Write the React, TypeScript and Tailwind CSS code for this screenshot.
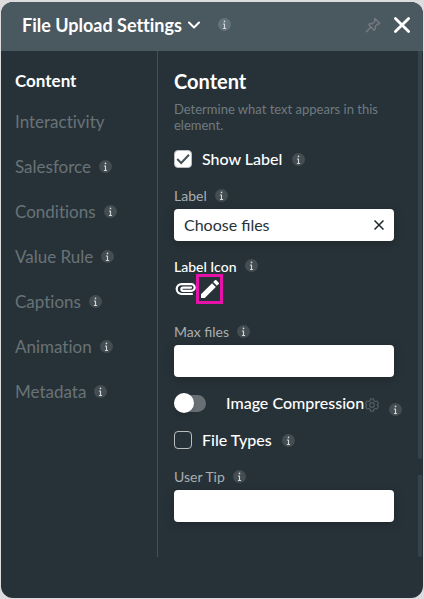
import { useState } from 'react'
import type { ReactNode } from 'react'
import { FaInfo } from 'react-icons/fa6'

interface Tab {
  name: string
  info: boolean
}

const tabs: Tab[] = [
  { name: 'Interactivity', info: false },
  { name: 'Salesforce', info: true },
  { name: 'Conditions', info: true },
  { name: 'Value Rule', info: true },
  { name: 'Captions', info: true },
  { name: 'Animation', info: true },
  { name: 'Metadata', info: true },
]

function InfoDot({ light = false }: { light?: boolean }) {
  return (
    <span
      className={`flex h-[13px] w-[13px] shrink-0 items-center justify-center rounded-full text-[#d5d9db] ${
        light ? 'bg-[#64727a]' : 'bg-[#434d52]'
      }`}
    >
      <FaInfo className="h-[9px] w-[9px]" />
    </span>
  )
}

function FieldLabel({ htmlFor, children }: { htmlFor: string; children: ReactNode }) {
  return (
    <div className="flex h-5 items-start gap-2">
      <label htmlFor={htmlFor} className="text-sm leading-[14px] text-[#a9aeb0]">
        {children}
      </label>
      <InfoDot />
    </div>
  )
}

function CheckRow({
  id,
  label,
  checked,
  onChange,
}: {
  id: string
  label: string
  checked: boolean
  onChange: (value: boolean) => void
}) {
  return (
    <div className="flex h-5 items-center">
      <span className="relative flex h-[18px] w-[18px]">
        <input
          id={id}
          type="checkbox"
          checked={checked}
          onChange={(e) => onChange(e.target.checked)}
          className="h-[18px] w-[18px] appearance-none rounded border border-[#b9bdbf] checked:bg-white"
        />
        {checked && (
          <svg viewBox="0 0 18 18" className="pointer-events-none absolute inset-0" fill="none">
            <path d="M3.2 9l4 4L15 4.8" stroke="#46535a" strokeWidth="2" />
          </svg>
        )}
      </span>
      <label htmlFor={id} className="mx-2.5 text-base leading-5 font-medium text-white">
        {label}
      </label>
      <InfoDot />
    </div>
  )
}

export default function App() {
  const [showLabel, setShowLabel] = useState(true)
  const [fileTypes, setFileTypes] = useState(false)
  const [compression, setCompression] = useState(false)
  const [label, setLabel] = useState('Choose files')
  const [maxFiles, setMaxFiles] = useState('')
  const [userTip, setUserTip] = useState('')

  const inputClass =
    'h-8 w-full rounded bg-white px-2.5 pb-0.5 text-base text-[#263238] shadow-[0_2px_8px_rgba(0,0,0,0.25)] outline-none'

  return (
    <div className="min-h-screen bg-[#dcdcde] px-px pt-0.5 pb-px font-['Lato',sans-serif]">
      <section className="flex min-h-[calc(100vh-3px)] flex-col overflow-hidden rounded-xl bg-[#273238]">
        <header className="flex h-[49px] items-center bg-[#4a585f] pr-3 pb-1 pl-[21px] [font-variant-ligatures:none]">
          <button className="flex items-center gap-1.5 text-white">
            <h1 className="text-lg leading-6 font-bold whitespace-nowrap">File Upload Settings</h1>
            <svg viewBox="0 0 12 8" className="h-2 w-3" fill="none" stroke="currentColor" strokeWidth="2">
              <path d="M1 1.5l5 5 5-5" strokeLinecap="round" strokeLinejoin="round" />
            </svg>
          </button>
          <span className="ml-[18px]">
            <InfoDot light />
          </span>
          <button aria-label="Pin" className="ml-auto text-[#76777f]">
            <svg viewBox="0 0 16 16" className="h-4 w-4" fill="none" stroke="currentColor" strokeWidth="1.5">
              <path
                d="M9.8 1.4l4.8 4.8-1 1-1-.3-2.4 2.6.2 2.5-1.3 1.2-5.4-5.4 1.2-1.3 2.5.2 2.6-2.4-.3-1zM6.2 9.8L1.4 14.6"
                strokeLinejoin="round"
                strokeLinecap="round"
              />
            </svg>
          </button>
          <button aria-label="Close" className="ml-3 text-white">
            <svg viewBox="0 0 18 18" className="h-[18px] w-[18px]" stroke="currentColor" strokeWidth="2.8">
              <path d="M2.4 2.4l13.2 13.2M15.6 2.4L2.4 15.6" strokeLinecap="round" />
            </svg>
          </button>
        </header>

        <div className="flex flex-1 pb-[41px]">
          <nav className="flex w-[157px] shrink-0 flex-col border-r border-[#465157] pt-2 pl-3.5 [font-variant-ligatures:none]">
            <a href="#content" className="flex h-10 items-center pt-1 text-[17px] leading-6 font-bold text-white">
              Content
            </a>
            {tabs.map((tab) => (
              <a
                key={tab.name}
                href={`#${tab.name}`}
                className="flex h-[45px] items-center gap-2 text-[17px] leading-6 text-[#697277]"
              >
                {tab.name}
                {tab.info && <InfoDot />}
              </a>
            ))}
          </nav>

          <main className="min-w-0 flex-1 pt-[18px] pr-6 pl-4">
            <h2 className="text-xl leading-6 font-bold text-white">Content</h2>
            <p className="mt-2 text-[13px] leading-4 text-[#6f7a80]">
              Determine what text appears in this element.
            </p>

            <div className="mt-4">
              <CheckRow id="show-label" label="Show Label" checked={showLabel} onChange={setShowLabel} />
            </div>

            <div className="mt-5">
              <FieldLabel htmlFor="label">Label</FieldLabel>
              <div className="relative">
                <input
                  id="label"
                  value={label}
                  onChange={(e) => setLabel(e.target.value)}
                  className={inputClass}
                />
                <button
                  aria-label="Clear"
                  onClick={() => setLabel('')}
                  className="absolute inset-y-0 right-2 flex items-center px-0.5 text-[#20282c]"
                >
                  <svg viewBox="0 0 10 10" className="h-2.5 w-2.5" stroke="currentColor" strokeWidth="1.5">
                    <path d="M0.5 0.5l9 9M9.5 0.5l-9 9" />
                  </svg>
                </button>
              </div>
            </div>

            <div className="mt-4 flex h-[17px] items-start gap-2">
              <span className="text-sm leading-5 font-medium text-white">Label Icon</span>
              <span className="mt-0.5">
                <InfoDot />
              </span>
            </div>
            <div className="flex items-center text-white">
              <svg viewBox="0 0 22 14" className="h-3.5 w-[22px]" fill="none" stroke="currentColor" strokeWidth="2.2">
                <path
                  d="M18 12H7.6A4.9 4.9 0 0 1 7.6 2.2H17.4A3.3 3.3 0 0 1 17.4 8.8H9A1.6 1.6 0 0 1 9 5.6H17"
                  strokeLinecap="round"
                />
              </svg>
              <button
                aria-label="Edit icon"
                className="flex h-[30px] w-[27px] items-center justify-center border-3 border-[#e511a8]"
              >
                <svg viewBox="3 3 18 18" className="h-[18px] w-[18px]" fill="currentColor">
                  <path d="M3 17.25V21h3.75L17.81 9.94l-3.75-3.75L3 17.25zM20.71 7.04a1 1 0 0 0 0-1.41l-2.34-2.34a1 1 0 0 0-1.41 0l-1.83 1.83 3.75 3.75 1.83-1.83z" />
                </svg>
              </button>
            </div>

            <div className="mt-[21px]">
              <FieldLabel htmlFor="max-files">Max files</FieldLabel>
              <input
                id="max-files"
                value={maxFiles}
                onChange={(e) => setMaxFiles(e.target.value)}
                className={inputClass}
              />
            </div>

            <div className="mt-4 flex h-5 items-center">
              <span className="relative flex h-5 w-8 items-center">
                <input
                  id="compression"
                  type="checkbox"
                  role="switch"
                  checked={compression}
                  onChange={(e) => setCompression(e.target.checked)}
                  className="peer h-[17px] w-8 appearance-none rounded-full bg-[#686f75] checked:bg-sky-600"
                />
                <span className="pointer-events-none absolute left-0 h-5 w-5 rounded-full bg-white shadow-md peer-checked:left-3" />
              </span>
              <label
                htmlFor="compression"
                className="ml-5 text-base leading-5 font-medium whitespace-nowrap text-white"
              >
                Image Compression
              </label>
              <button aria-label="Compression settings" className="ml-px pt-1 text-[#525d62]">
                <svg viewBox="0 0 24 24" className="h-3.5 w-3.5" fill="none" stroke="currentColor" strokeWidth="2">
                  <circle cx="12" cy="12" r="4" />
                  <path
                    d="M9.5 1.5h5l.8 3.2 2.2 1.3 3.2-.9 2.5 4.3L20.9 12l2.3 2.6-2.5 4.3-3.2-.9-2.2 1.3-.8 3.2h-5l-.8-3.2L6.5 18l-3.2.9-2.5-4.3L3.1 12 .8 9.4l2.5-4.3 3.2.9 2.2-1.3z"
                    strokeLinejoin="round"
                  />
                </svg>
              </button>
              <span className="mt-3 ml-2.5">
                <InfoDot />
              </span>
            </div>

            <div className="mt-[17px]">
              <CheckRow id="file-types" label="File Types" checked={fileTypes} onChange={setFileTypes} />
            </div>

            <div className="mt-5">
              <FieldLabel htmlFor="user-tip">User Tip</FieldLabel>
              <input
                id="user-tip"
                value={userTip}
                onChange={(e) => setUserTip(e.target.value)}
                className={inputClass}
              />
            </div>
          </main>

          {/* scroll thumbs of the two stacked areas */}
          <div className="mr-px flex w-1 shrink-0 flex-col gap-4">
            <div className="grow-5 rounded-b bg-[#36434a]" />
            <div className="grow rounded-b bg-[#36434a]" />
          </div>
        </div>
      </section>
    </div>
  )
}
